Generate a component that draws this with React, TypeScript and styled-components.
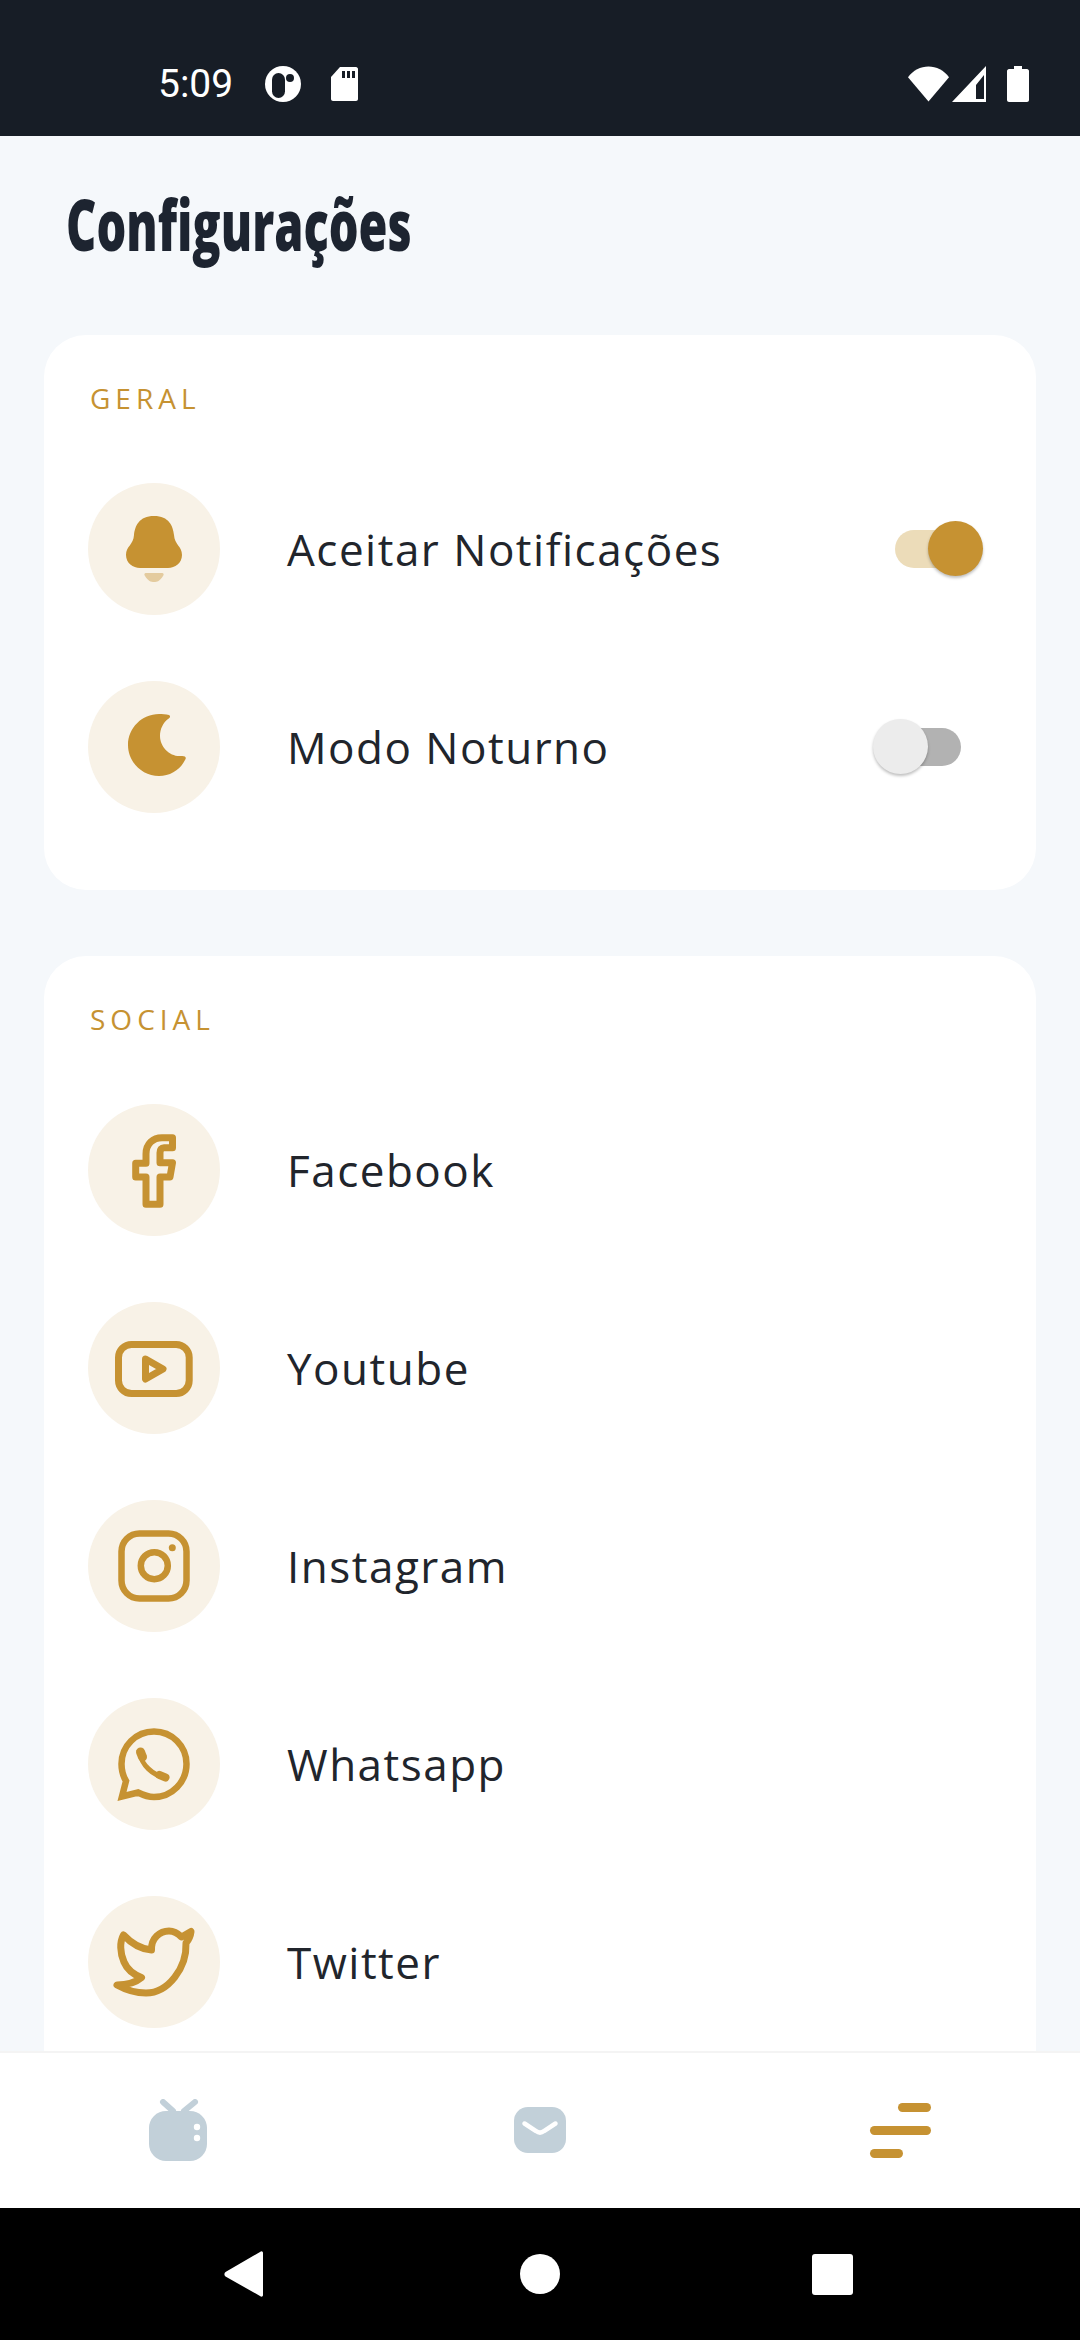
import React from "react";
import styled, { createGlobalStyle } from "styled-components";

const GOLD = "#c69232";

const GlobalStyle = createGlobalStyle`
  html, body {
    margin: 0;
    padding: 0;
    background: #f5f8fb;
  }
  * {
    box-sizing: border-box;
  }
`;

const BellIcon = () => (
  <S.Icon viewBox="0 0 72 72">
    <path
      fill={GOLD}
      d="M36 3C21 3 17 13 16 22C15.5 32 8 33 8 42C8 50 15 55 22 55L50 55C57 55 64 50 64 42C64 33 56.5 32 56 22C55 13 51 3 36 3Z"
    />
    <path
      fill={GOLD}
      opacity="0.4"
      d="M28 60H44C46 60 46 62 45 63C42 68 39 69 36 69C33 69 30 68 27 63C26 62 26 60 28 60Z"
    />
  </S.Icon>
);

const MoonIcon = () => (
  <S.Icon viewBox="0 0 72 72">
    <path
      fill={GOLD}
      d="M41 3C44 3 48 3 51 4C53 5 52 7 50 8C45 12 42 18 42 25C42 36 52 46 63 45C67 44.6 69 46 67 49C62 59 52 65 41 65C24 65 10 51 10 34C10 17 24 3 41 3Z"
    />
  </S.Icon>
);

const FacebookIcon = () => (
  <S.Icon viewBox="0 0 72 72">
    <path
      fill="none"
      stroke={GOLD}
      strokeWidth="7"
      strokeLinejoin="round"
      d="M54.5 3.7V13.7H46C43.5 13.7 42 15.5 42 18.7V28.7H54.5L52 43H42V70.3H28V43H17.7V29.3H28V20C28 10 35 3.7 44 3.7Z"
    />
  </S.Icon>
);

const YoutubeIcon = () => (
  <S.Icon viewBox="0 0 72 72">
    <rect x="0.5" y="12.5" width="70.7" height="49" rx="13" fill="none" stroke={GOLD} strokeWidth="7" />
    <path
      fill="none"
      stroke={GOLD}
      strokeWidth="7"
      strokeLinejoin="round"
      d="M27.5 27L45 37L27.5 47Z"
    />
  </S.Icon>
);

const InstagramIcon = () => (
  <S.Icon viewBox="0 0 72 72">
    <rect x="3.5" y="3.5" width="65" height="65" rx="18" fill="none" stroke={GOLD} strokeWidth="6.5" />
    <circle cx="36.3" cy="35.7" r="13.5" fill="none" stroke={GOLD} strokeWidth="6.5" />
    <circle cx="54.3" cy="17.8" r="3.5" fill={GOLD} />
  </S.Icon>
);

const WhatsappIcon = () => (
  <S.Icon viewBox="0 0 72 72">
    <path
      fill="none"
      stroke={GOLD}
      strokeWidth="6.5"
      strokeLinejoin="miter"
      d="M8 53L4 68.5L20 64.5C25 67 30 69 36 69C54 69 68.5 54 68.5 36C68.5 18 54 3.5 36 3.5C18 3.5 3.5 18 3.5 36C3.5 42 5 48 8 53Z"
    />
    <path fill="none" stroke={GOLD} strokeWidth="5" strokeLinecap="round" d="M22.5 26C23 36 35 48 47 49" />
    <path fill="none" stroke={GOLD} strokeWidth="9" strokeLinecap="round" d="M22.5 24L24.5 29" />
    <path fill="none" stroke={GOLD} strokeWidth="8" strokeLinecap="round" d="M41.5 47L47.5 49.5" />
  </S.Icon>
);

const TwitterIcon = () => (
  <S.Icon viewBox="0 0 72 72">
    <path
      fill="none"
      stroke={GOLD}
      strokeWidth="7"
      strokeLinejoin="round"
      d="M5.5 9C12 16 22 23 33.5 24C33 12 42 5 51 5C56 5 60 7.5 63.5 11L73 5.5C72.5 10 70.5 14 68 17C69 42 50 67 28 67C18 67 8 64 -1 59C8 59 17 57 23.5 51.5C14 48 9 43 6 36C2 27 1.5 16 5.5 9Z"
    />
  </S.Icon>
);

const TvIcon = () => (
  <svg width="62" height="62" viewBox="0 0 62 62">
    <path d="M14 3L24 12M46 3L35 12" stroke="#c2d0d9" strokeWidth="6" strokeLinecap="round" />
    <rect x="0" y="12" width="58" height="50" rx="17" fill="#c2d0d9" />
    <circle cx="48" cy="28" r="3.2" fill="#fff" />
    <circle cx="48" cy="39" r="3.2" fill="#fff" />
  </svg>
);

const MailIcon = () => (
  <svg width="52" height="46" viewBox="0 0 52 46">
    <rect x="0" y="0" width="52" height="46" rx="14" fill="#c2d0d9" />
    <path
      d="M10.5 16.5L22 24C24.5 26 27.5 26 30 24L41.5 16.5"
      fill="none"
      stroke="#fff"
      strokeWidth="4.5"
      strokeLinecap="round"
    />
  </svg>
);

const MenuIcon = () => (
  <S.MenuLines>
    <S.MenuLine $width={33} $end />
    <S.MenuLine $width={61} />
    <S.MenuLine $width={33} />
  </S.MenuLines>
);

const Row = (props: { icon: React.ReactNode; label: string; children?: React.ReactNode }) => (
  <S.Row>
    <S.IconCircle>{props.icon}</S.IconCircle>
    <S.RowLabel>{props.label}</S.RowLabel>
    {props.children}
  </S.Row>
);

const App = () => {
  return (
    <S.Screen>
      <GlobalStyle />
      <S.StatusBar>
        <S.Time>5:09</S.Time>
        <svg width="36" height="38" viewBox="0 0 36 38">
          <circle cx="18" cy="19" r="18" fill="#fff" />
          <rect x="7" y="8" width="13" height="25" rx="6.5" fill="#171d26" />
          <circle cx="25" cy="13" r="4" fill="#171d26" />
        </svg>
        <S.SdCard viewBox="0 0 27 34" width="27" height="34">
          <path
            fill="#fff"
            d="M9 0H25C26 0 27 1 27 2V32C27 33 26 34 25 34H2C1 34 0 33 0 32V10Z"
          />
          <path fill="#171d26" d="M11 4H14V11H11ZM16 4H19V11H16ZM21 4H24V11H21Z" />
        </S.SdCard>
        <S.StatusRight>
          <svg width="41" height="36" viewBox="0 0 42 36">
            <path fill="#fff" d="M0 11C5 4 13 0 21 0C29 0 37 4 42 11L21 36Z" />
          </svg>
          <svg width="35" height="36" viewBox="0 0 35 36">
            <path fill="#fff" fillRule="evenodd" d="M34 0V36H0ZM32 9L24 19V33H32Z" />
          </svg>
          <S.Battery viewBox="0 0 22 36" width="22" height="36">
            <path
              fill="#fff"
              d="M7 0H15V3H20C21 3 22 4 22 5V34C22 35 21 36 20 36H2C1 36 0 35 0 34V5C0 4 1 3 2 3H7Z"
            />
          </S.Battery>
        </S.StatusRight>
      </S.StatusBar>

      <S.Content>
        <S.Title>
          <S.TitleText>Configurações</S.TitleText>
        </S.Title>

        <S.Card>
          <S.SectionLabel>GERAL</S.SectionLabel>
          <Row icon={<BellIcon />} label="Aceitar Notificações">
            <Toggle on />
          </Row>
          <Row icon={<MoonIcon />} label="Modo Noturno">
            <Toggle />
          </Row>
        </S.Card>

        <S.Card>
          <S.SectionLabel>SOCIAL</S.SectionLabel>
          <Row icon={<FacebookIcon />} label="Facebook" />
          <Row icon={<YoutubeIcon />} label="Youtube" />
          <Row icon={<InstagramIcon />} label="Instagram" />
          <Row icon={<WhatsappIcon />} label="Whatsapp" />
          <Row icon={<TwitterIcon />} label="Twitter" />
        </S.Card>
      </S.Content>

      <S.TabBar>
        <S.Tab>
          <TvIcon />
        </S.Tab>
        <S.Tab>
          <MailIcon />
        </S.Tab>
        <S.Tab>
          <MenuIcon />
        </S.Tab>
      </S.TabBar>

      <S.NavBar>
        <svg width="44" height="46" viewBox="0 0 44 46">
          <path
            fill="#fff"
            d="M36 1C37.5 -0.5 39 0.5 39 2V44C39 45.5 37.5 46.5 36 45L1.5 25.5C0 24.5 0 22 1.5 21Z"
          />
        </svg>
        <svg width="40" height="40" viewBox="0 0 40 40">
          <circle cx="20" cy="20" r="20" fill="#fff" />
        </svg>
        <svg width="41" height="41" viewBox="0 0 41 41">
          <rect width="41" height="41" rx="3" fill="#fff" />
        </svg>
      </S.NavBar>
    </S.Screen>
  );
};

const Toggle = (props: { on?: boolean }) => (
  <S.Track $on={props.on}>
    <S.Knob $on={props.on} />
  </S.Track>
);

export default App;

const S = {
  Screen: styled.div`
    display: flex;
    flex-direction: column;
    width: 1080px;
    height: 2340px;
    overflow: hidden;
    background: #f5f8fb;
  `,
  StatusBar: styled.div`
    display: flex;
    align-items: center;
    flex: 0 0 136px;
    padding: 32px 51px 0 158px;
    background: #171d26;
    color: #fff;
  `,
  Time: styled.span`
    font-family: Roboto, sans-serif;
    font-size: 39px;
    line-height: 44px;
    margin-right: 32px;
  `,
  SdCard: styled.svg`
    margin-left: 30px;
  `,
  StatusRight: styled.div`
    display: flex;
    align-items: center;
    margin-left: auto;
    gap: 3px;
  `,
  Battery: styled.svg`
    margin-left: 17px;
  `,
  Content: styled.div`
    flex: 1;
    min-height: 0;
    overflow: hidden;
    padding: 0 44px;
  `,
  Title: styled.h1`
    margin: 0;
    padding: 48px 0 0 22px;
    height: 199px;
    font-family: "Open Sans", sans-serif;
    font-size: 70px;
    line-height: 80px;
    font-weight: 800;
    color: #1d2430;
  `,
  TitleText: styled.span`
    display: inline-block;
    white-space: nowrap;
    transform: scaleX(0.67);
    transform-origin: left center;
  `,
  Card: styled.section`
    background: #fff;
    border-radius: 42px;
    padding: 44px 44px 11px;
    margin-bottom: 66px;
  `,
  SectionLabel: styled.div`
    font-family: "Open Sans", sans-serif;
    font-size: 28px;
    line-height: 38px;
    font-weight: 400;
    letter-spacing: 5px;
    color: ${GOLD};
    padding-left: 2px;
    margin-bottom: 66px;
  `,
  Row: styled.div`
    display: flex;
    align-items: center;
    height: 132px;
    margin-bottom: 66px;
  `,
  IconCircle: styled.div`
    display: flex;
    align-items: center;
    justify-content: center;
    flex: 0 0 132px;
    height: 132px;
    border-radius: 50%;
    background: #f8f2e7;
  `,
  Icon: styled.svg`
    width: 72px;
    height: 72px;
    overflow: visible;
  `,
  RowLabel: styled.span`
    margin-left: 67px;
    font-family: "Open Sans", sans-serif;
    font-size: 44px;
    line-height: 60px;
    letter-spacing: 1.5px;
    color: #21252c;
  `,
  Track: styled.div<{ $on?: boolean }>`
    position: relative;
    width: 72px;
    height: 38px;
    margin-left: auto;
    margin-right: ${(p) => (p.$on ? "25px" : "31px")};
    border-radius: 19px;
    background: ${(p) => (p.$on ? "#ecdcb9" : "#b2b2b2")};
  `,
  Knob: styled.div<{ $on?: boolean }>`
    position: absolute;
    top: -9px;
    ${(p) => (p.$on ? "right: -16px;" : "left: -16px;")}
    width: 55px;
    height: 55px;
    border-radius: 50%;
    background: ${(p) => (p.$on ? GOLD : "#ececec")};
    box-shadow: 0 2px 3px rgba(0, 0, 0, 0.25);
  `,
  TabBar: styled.div`
    display: grid;
    grid-template-columns: repeat(3, 1fr);
    flex: 0 0 157px;
    background: #fff;
    border-top: 2px solid #f4f4f4;
  `,
  Tab: styled.div`
    display: flex;
    align-items: center;
    justify-content: center;
    padding-bottom: 1px;
  `,
  MenuLines: styled.div`
    display: flex;
    flex-direction: column;
    gap: 14px;
    width: 61px;
  `,
  MenuLine: styled.div<{ $width: number; $end?: boolean }>`
    width: ${(p) => p.$width}px;
    height: 9px;
    border-radius: 5px;
    background: ${GOLD};
    align-self: ${(p) => (p.$end ? "flex-end" : "flex-start")};
  `,
  NavBar: styled.div`
    display: flex;
    align-items: center;
    flex: 0 0 132px;
    gap: 252px;
    padding: 0 0 0 224px;
    background: #000;
  `,
};
